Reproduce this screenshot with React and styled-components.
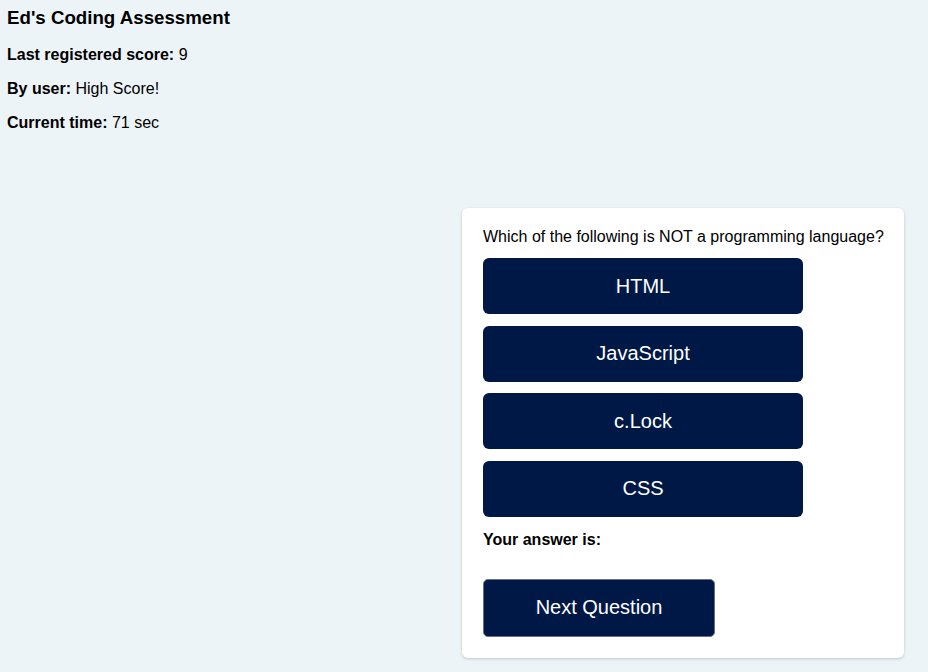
import React from 'react';
import styled, { createGlobalStyle } from 'styled-components';

const GlobalStyle = createGlobalStyle`
  html, body {
    margin: 0;
    padding: 0;
    background: #edf4f8;
  }

  body {
    font-family: 'Liberation Sans', Arial, Helvetica, sans-serif;
    color: #000;
  }
`;

const Page = styled.div`
  min-height: 672px;
  box-sizing: border-box;
  padding: 7px 24px 14px 7px;
`;

const Header = styled.header`
  display: flex;
  flex-direction: column;
  gap: 16px;
`;

const Title = styled.h1`
  margin: 0 0 1px;
  font-size: 18.7px;
  line-height: 22px;
  font-weight: bold;
`;

const Stat = styled.p`
  margin: 0;
  font-size: 16px;
  line-height: 18px;

  strong {
    font-weight: bold;
  }
`;

const Layout = styled.div`
  display: grid;
  grid-template-columns: 1fr 442px;
  margin-top: 76px;
`;

const Card = styled.section`
  grid-column: 2;
  background: #fff;
  border-radius: 6px;
  box-shadow: 0 1px 3px rgba(0, 0, 0, 0.2);
  padding: 20px 21px 21px;
  display: flex;
  flex-direction: column;
  align-items: flex-start;
`;

const Question = styled.p`
  margin: 0 0 12px;
  font-size: 16px;
  line-height: 18px;
  white-space: nowrap;
`;

const Choices = styled.div`
  display: flex;
  flex-direction: column;
  gap: 11.5px;
`;

const Choice = styled.button`
  width: 320px;
  height: 56px;
  border: none;
  border-radius: 6px;
  background: #001845;
  color: #fff;
  font-family: inherit;
  font-size: 20px;
  cursor: pointer;
`;

const Answer = styled.p`
  margin: 14px 0 0;
  font-size: 16px;
  line-height: 18px;
  font-weight: bold;
`;

const NextButton = styled.button`
  margin-top: 30px;
  width: 232px;
  height: 58px;
  border: 1px solid #6b6f77;
  border-radius: 5px;
  background: #001845;
  color: #fff;
  font-family: inherit;
  font-size: 20px;
  cursor: pointer;
`;

const choices = ['HTML', 'JavaScript', 'c.Lock', 'CSS'];

export default function App() {
  return (
    <>
      <GlobalStyle />
      <Page>
        <Header>
          <Title>Ed's Coding Assessment</Title>
          <Stat>
            <strong>Last registered score:</strong> 9
          </Stat>
          <Stat>
            <strong>By user:</strong> High Score!
          </Stat>
          <Stat>
            <strong>Current time:</strong> 71 sec
          </Stat>
        </Header>
        <Layout>
          <Card>
            <Question>Which of the following is NOT a programming language?</Question>
            <Choices>
              {choices.map((c) => (
                <Choice key={c}>{c}</Choice>
              ))}
            </Choices>
            <Answer>Your answer is:</Answer>
            <NextButton>Next Question</NextButton>
          </Card>
        </Layout>
      </Page>
    </>
  );
}
